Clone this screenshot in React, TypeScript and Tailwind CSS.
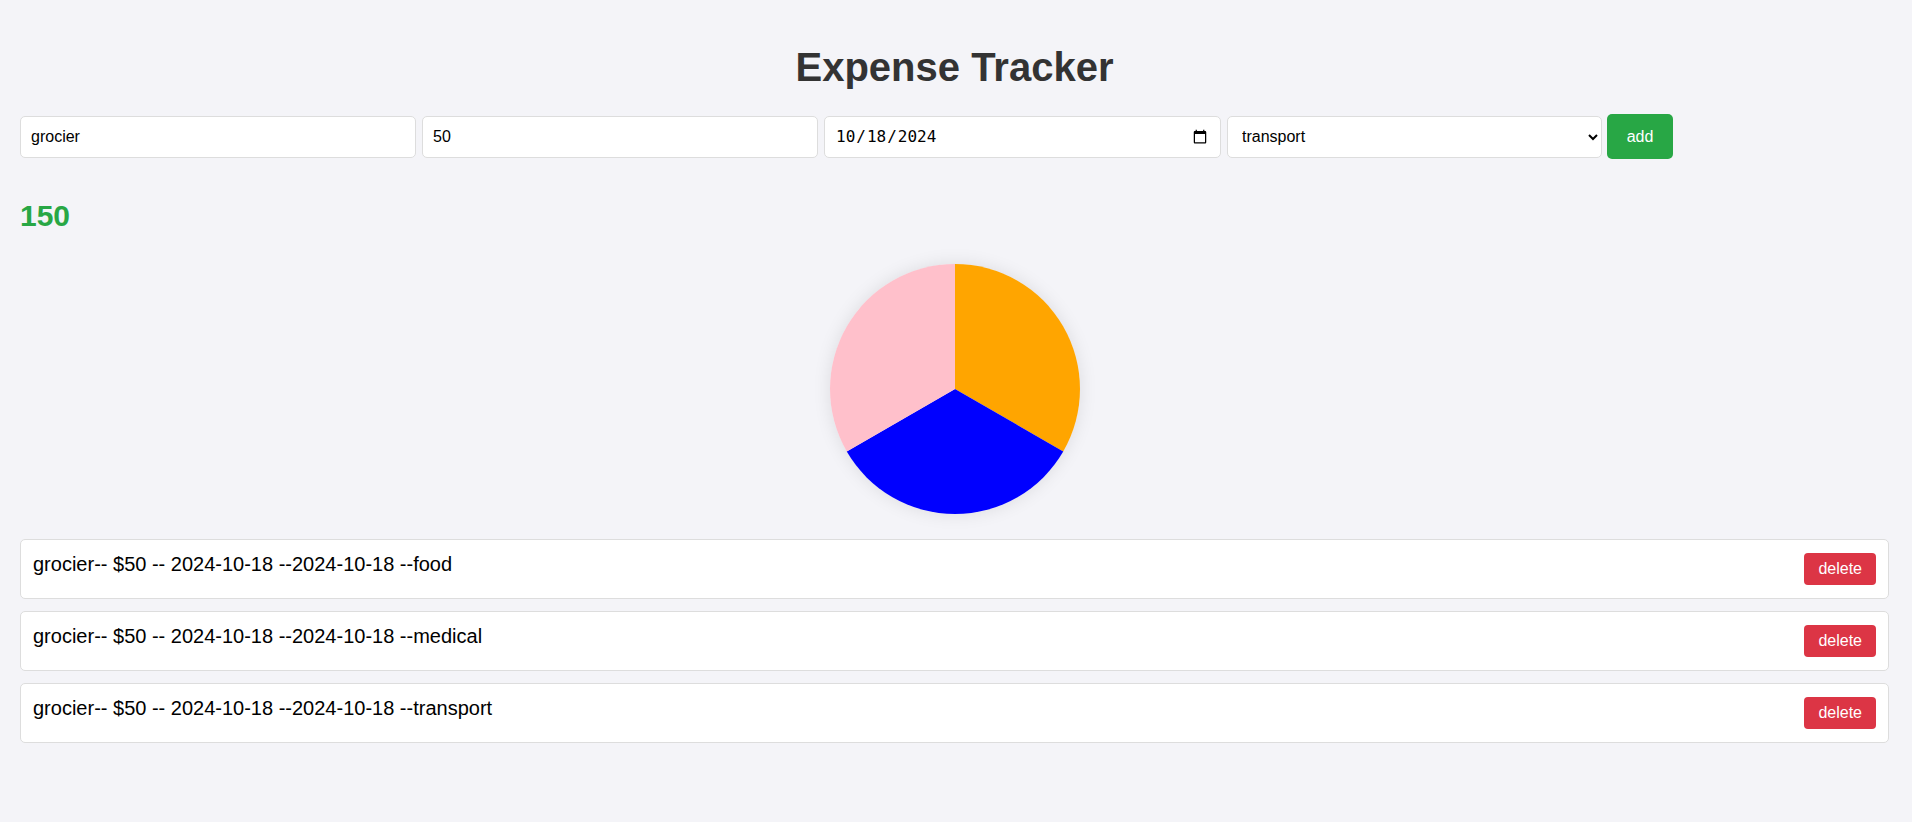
import React from "react";

const items = ["food", "medical", "transport"];

export default function App() {
  return (
    <div
      className="min-h-screen bg-[#f4f4f8] pt-[44px] pl-[20px] pr-[23px] text-black"
      style={{ fontFamily: '"Liberation Sans", Arial, sans-serif' }}
    >
      <h1 className="m-0 mb-[24px] text-center text-[40px] font-bold leading-[46px] text-[#333333]">
        Expense Tracker
      </h1>

      <div className="flex h-[45px] items-center">
        <input
          type="text"
          defaultValue="grocier"
          className="box-border h-[42px] w-[396px] rounded-[5px] border border-[#dddddd] bg-white px-[10px] text-[16px] text-black outline-none"
        />
        <input
          type="number"
          defaultValue="50"
          className="ml-[6px] box-border h-[42px] w-[396px] rounded-[5px] border border-[#dddddd] bg-white px-[10px] text-[16px] text-black outline-none [appearance:textfield] [&::-webkit-inner-spin-button]:appearance-none [&::-webkit-outer-spin-button]:appearance-none"
        />
        <input
          type="date"
          defaultValue="2024-10-18"
          className="ml-[6px] box-border h-[42px] w-[397px] rounded-[5px] border border-[#dddddd] bg-white px-[10px] text-[16px] text-black outline-none"
          style={{ fontFamily: '"DejaVu Sans Mono", monospace' }}
        />
        <select
          defaultValue="transport"
          className="ml-[6px] box-border h-[42px] w-[375px] rounded-[5px] border border-[#dddddd] bg-white px-[10px] text-[16px] text-black outline-none"
        >
          <option value="food">food</option>
          <option value="medical">medical</option>
          <option value="transport">transport</option>
        </select>
        <button className="ml-[5px] box-border h-[45px] w-[66px] rounded-[5px] bg-[#28a745] text-[16px] text-white">
          add
        </button>
      </div>

      <h2 className="m-0 mt-[40px] text-[30px] font-bold leading-[34px] text-[#28a745]">150</h2>

      <div className="mt-[31px] flex justify-center">
        <div className="h-[250px] w-[250px] rounded-full shadow-[0_0_18px_rgba(0,0,0,0.1)]">
          <svg width="250" height="250" viewBox="0 0 250 250" className="block">
            <path d="M125,125 L125,0 A125,125 0 0 1 233.25,187.5 Z" fill="#FFA500" />
            <path d="M125,125 L233.25,187.5 A125,125 0 0 1 16.75,187.5 Z" fill="#0000FF" />
            <path d="M125,125 L16.75,187.5 A125,125 0 0 1 125,0 Z" fill="#FFC0CB" />
          </svg>
        </div>
      </div>

      <ul className="m-0 mt-[25px] flex list-none flex-col gap-[12px] p-0">
        {items.map((c) => (
          <li
            key={c}
            className="box-border flex h-[60px] items-center justify-between rounded-[5px] border border-[#dddddd] bg-white px-[12px]"
          >
            <span className="pb-[10px] text-[20px] leading-[23px] text-black">
              grocier-- $50 -- 2024-10-18 --2024-10-18 --{c}
            </span>
            <button className="box-border h-[32px] rounded-[4px] bg-[#dc3545] px-[14px] text-[16px] leading-[18px] text-white">
              delete
            </button>
          </li>
        ))}
      </ul>
    </div>
  );
}
